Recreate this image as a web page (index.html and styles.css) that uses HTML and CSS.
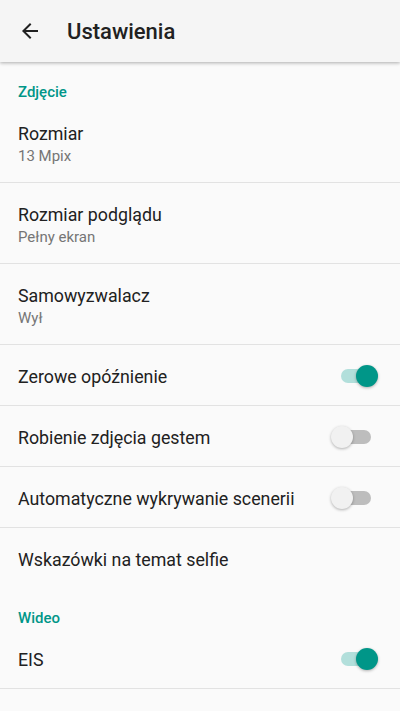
FILE: index.html
```html
<!DOCTYPE html>
<html lang="pl">
<head>
<meta charset="utf-8">
<link rel="stylesheet" href="styles.css">
</head>
<body>
<header class="toolbar">
  <svg class="back" width="24" height="24" viewBox="0 0 24 24"><path d="M20 11H7.83l5.59-5.59L12 4l-8 8 8 8 1.41-1.41L7.83 13H20v-2z" fill="#212121"/></svg>
  <h1 class="title">Ustawienia</h1>
</header>
<main class="list">
  <div class="category">Zdjęcie</div>
  <div class="row two">
    <div class="texts"><div class="rtitle">Rozmiar</div><div class="summary">13 Mpix</div></div>
  </div>
  <div class="row two">
    <div class="texts"><div class="rtitle">Rozmiar podglądu</div><div class="summary">Pełny ekran</div></div>
  </div>
  <div class="row two">
    <div class="texts"><div class="rtitle">Samowyzwalacz</div><div class="summary">Wył</div></div>
  </div>
  <div class="row">
    <div class="texts"><div class="rtitle">Zerowe opóźnienie</div></div>
    <div class="switch on"><span class="track"></span><span class="thumb"></span></div>
  </div>
  <div class="row">
    <div class="texts"><div class="rtitle">Robienie zdjęcia gestem</div></div>
    <div class="switch"><span class="track"></span><span class="thumb"></span></div>
  </div>
  <div class="row">
    <div class="texts"><div class="rtitle">Automatyczne wykrywanie scenerii</div></div>
    <div class="switch"><span class="track"></span><span class="thumb"></span></div>
  </div>
  <div class="row last">
    <div class="texts"><div class="rtitle">Wskazówki na temat selfie</div></div>
  </div>
  <div class="category">Wideo</div>
  <div class="row">
    <div class="texts"><div class="rtitle">EIS</div></div>
    <div class="switch on"><span class="track"></span><span class="thumb"></span></div>
  </div>
</main>
</body>
</html>
```
FILE: styles.css
```css
html, body {
  margin: 0;
  padding: 0;
  background: #fafafa;
  font-family: Roboto, "Noto Sans", sans-serif;
  color: #212121;
  height: 100%;
  overflow: hidden;
}
.toolbar {
  height: 62px;
  background: #f5f5f5;
  display: flex;
  align-items: center;
  box-shadow: 0 1px 3px rgba(0,0,0,0.22), 0 2px 4px rgba(0,0,0,0.08);
  position: relative;
  z-index: 1;
}
.back {
  margin-left: 18px;
  flex: none;
}
.title {
  margin: 0 0 0 25px;
  font-size: 22px;
  font-weight: 500;
  color: #212121;
}
.list {
  display: flex;
  flex-direction: column;
}
.category {
  height: 20px;
  padding: 20px 0 0 18px;
  font-size: 15px;
  line-height: 20px;
  font-weight: 500;
  color: #009688;
}
.row {
  display: flex;
  align-items: center;
  padding: 20px 21px 16px 18px;
  border-bottom: 1px solid #e2e2e2;
}
.row.last {
  border-bottom: none;
}
.texts {
  flex: 1;
  min-width: 0;
}
.rtitle {
  font-size: 17.8px;
  line-height: 24px;
  color: #212121;
}
.summary {
  font-size: 15px;
  line-height: 20px;
  color: #757575;
}
.switch {
  position: relative;
  width: 48px;
  height: 24px;
  flex: none;
}
.track {
  position: absolute;
  left: 10px;
  top: 4px;
  width: 30px;
  height: 14px;
  border-radius: 7px;
  background: #bdbdbd;
}
.thumb {
  position: absolute;
  left: 0;
  top: 0;
  width: 22px;
  height: 22px;
  border-radius: 50%;
  background: #f1f1f1;
  box-shadow: 0 1px 3px rgba(0,0,0,0.3);
}
.switch.on .track {
  background: #b2dfdb;
}
.switch.on .thumb {
  left: 25px;
  background: #009688;
}
```
